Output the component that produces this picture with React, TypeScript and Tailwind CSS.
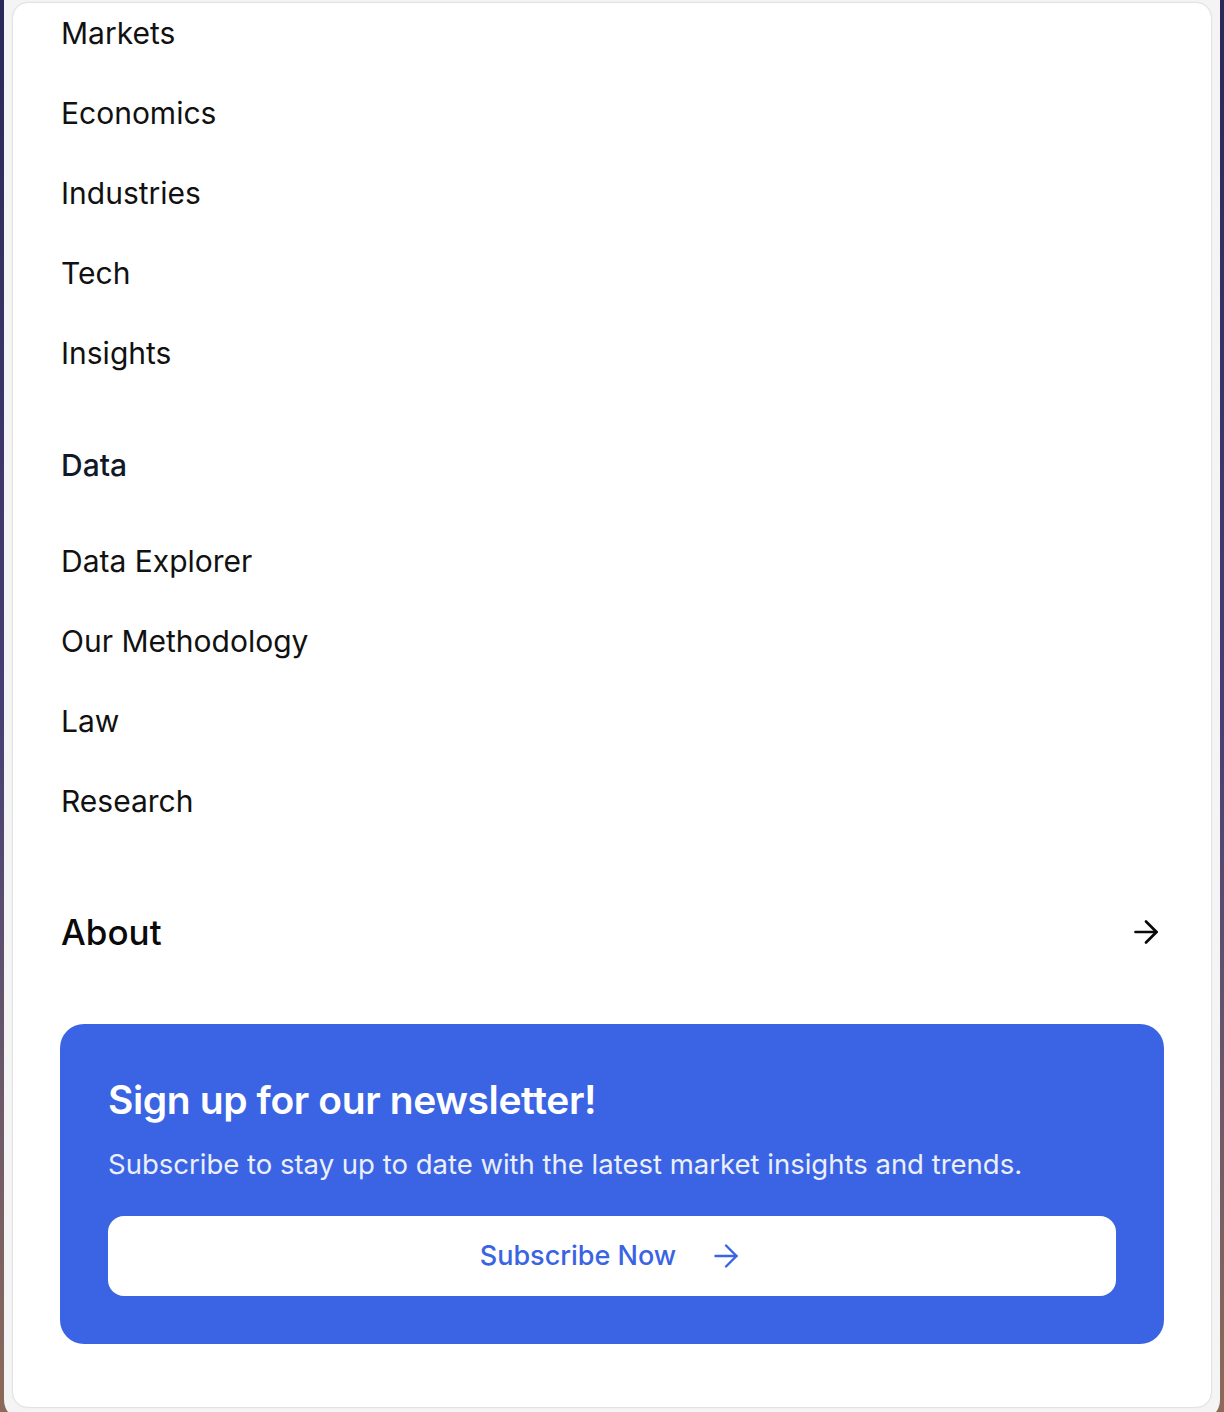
import React from 'react';
import { ArrowRight } from 'lucide-react';

const topLinks = ['Markets', 'Economics', 'Industries', 'Tech', 'Insights'];
const dataLinks = ['Data Explorer', 'Our Methodology', 'Law', 'Research'];

const NavItem = ({ label }: { label: string }) => (
  <a href="#" className="flex h-[80px] items-center text-[30px] leading-[40px] text-[#111111]">
    {label}
  </a>
);

const App = () => {
  return (
    <div
      className="h-[1412px] w-full overflow-hidden bg-gradient-to-b from-[#2a2858] via-[#463e74] to-[#8c6a58] px-[4px]"
      style={{ fontFamily: 'Inter, "Noto Sans", sans-serif' }}
    >
      <div className="h-[1420px] rounded-b-[20px] bg-[#f4f4f4] px-[8px] pt-[2px]">
        <div className="h-[1406px] overflow-hidden rounded-[16px] border border-[#e2e2e2] bg-white px-[47px] shadow-[0_0_2px_rgba(0,0,0,0.06)]">
          <nav className="-mt-[10px] flex flex-col pl-[1px]">
            {topLinks.map((l) => (
              <NavItem key={l} label={l} />
            ))}
          </nav>

          <div className="mt-[32px] flex h-[80px] items-center pl-[1px] text-[30px] font-medium leading-[40px] text-[#111827]">
            Data
          </div>

          <nav className="mt-[16px] flex flex-col pl-[1px]">
            {dataLinks.map((l) => (
              <NavItem key={l} label={l} />
            ))}
          </nav>

          <a href="#" className="mt-[51px] flex h-[80px] items-center justify-between pl-[1px]">
            <span className="text-[35px] font-medium leading-[44px] text-[#0a0a0a]">About</span>
            <ArrowRight size={36} strokeWidth={1.8} className="text-[#0a0a0a]" />
          </a>

          <div className="mt-[52px] rounded-[24px] bg-[#3a64e3] px-[48px] pb-[48px] pt-[52px]">
            <h2 className="text-[39px] font-semibold leading-[48px] tracking-[-0.01em] text-white">
              Sign up for our newsletter!
            </h2>
            <p className="mt-[22px] text-[27.5px] leading-[36px] text-white/90">
              Subscribe to stay up to date with the latest market insights and trends.
            </p>
            <button className="mt-[34px] flex h-[80px] w-full items-center justify-center gap-[32px] rounded-[16px] bg-white text-[27px] font-medium text-[#3a64e3]">
              Subscribe Now
              <ArrowRight size={36} strokeWidth={1.6} />
            </button>
          </div>
        </div>
      </div>
    </div>
  );
};

export default App;
